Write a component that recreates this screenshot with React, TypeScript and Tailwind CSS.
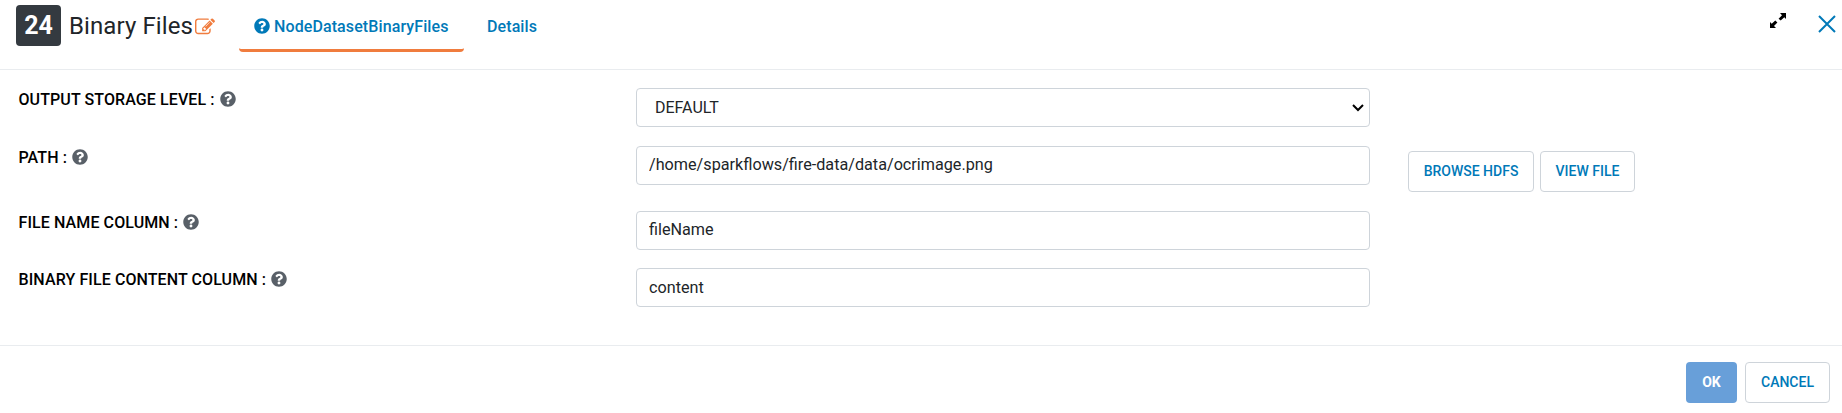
import type { ReactNode } from "react";
import { FaQuestionCircle } from "react-icons/fa";

function EditIcon() {
  return (
    <svg viewBox="0 0 1792 1792" className="size-[20px] fill-[#f07c3e]">
      <path d="M888 1184l116-116-152-152-116 116v56h96v96h56zm440-720q-16-16-33 1l-350 350q-17 17-1 33t33-1l350-350q17-17 1-33zm80 594v190q0 119-84.500 203.500t-203.500 84.500h-832q-119 0-203.500-84.500t-84.500-203.500v-832q0-119 84.500-203.500t203.500-84.500h832q63 0 117 25 15 7 18 23 3 17-9 29l-49 49q-14 14-32 8-23-6-45-6h-832q-66 0-113 47t-47 113v832q0 66 47 113t113 47h832q66 0 113-47t47-113v-126q0-13 9-22l64-64q15-15 35-7t20 29zm-96-738l288 288-672 672h-288v-288zm444 132l-92 92-288-288 92-92q28-28 68-28t68 28l152 152q28 28 28 68t-28 68z" />
    </svg>
  );
}

function Row({ label, className, children }: { label: string; className: string; children: ReactNode }) {
  return (
    <div className={`flex items-start ${className}`}>
      <div className="flex w-[618px] shrink-0 items-center gap-[5px] pl-[0.5px] pt-px text-[16px] leading-[22px] font-medium tracking-[0.1px] text-black">
        <span>{label}</span>
        <FaQuestionCircle className="-mt-[3px] size-[16px] text-[#596068]" />
      </div>
      {children}
    </div>
  );
}

const field = "h-[39px] w-[734px] rounded-[4px] border border-[#ced4da] bg-white text-[16.200px] text-[#212529]";
const button = "flex h-[41px] items-center justify-center rounded-[4px] border border-[#ced4da] text-[14px] font-medium text-[#0079b8]";

export default function App() {
  return (
    <div className="flex h-[413px] w-full flex-col bg-white font-[Roboto,sans-serif]">
      <header className="flex h-[70px] items-start border-b border-[#e9ecef] pl-[16px]">
        <div className="mt-[5px] flex h-[41px] w-[45px] items-center justify-center rounded-[4px] bg-[#343a40] text-[25px] font-bold text-white">24</div>
        <h1 className="ml-[8px] mt-[8px] w-[124px] whitespace-nowrap text-[24px] font-normal leading-[36px] tracking-[0.1px] text-[#212529]">Binary Files</h1>
        <div className="ml-[2px] mt-[17px]"><EditIcon /></div>
        <nav className="ml-[24px] flex text-[16px] font-medium tracking-[0.1px] text-[#0079b8]">
          <div className="flex h-[52px] w-[225px] items-center gap-[4px] rounded-[4px] border-b-3 border-[#f07c3e] pl-[15px] pt-[5px]">
            <FaQuestionCircle className="-mt-[3px] size-[16px]" />
            <span>NodeDatasetBinaryFiles</span>
          </div>
          <div className="flex h-[52px] items-center pl-[23px] pt-[2px]">Details</div>
        </nav>
        <svg viewBox="0 0 16 16" className="ml-auto mt-[13px] size-[16px] fill-black">
          <path d="M10 0H16V6L14.300 4.300L10.700 7.600L8.600 5.700L12 2.200ZM6 15H0V9L1.700 10.700L5.300 7.600L7.400 9.500L4 12.900Z" />
        </svg>
        <svg viewBox="0 0 18 18" className="ml-[32px] mr-[6px] mt-[15px] size-[18px] fill-none stroke-[#0079b8] stroke-2">
          <path d="M1 1L17 17M17 1L1 17" />
        </svg>
      </header>

      <main className="flex flex-1 flex-col pl-[18px]">
        <Row label="OUTPUT STORAGE LEVEL :" className="h-[58px] pt-[18px]">
          <div className={`${field} flex items-center justify-between pl-[18px] pr-[5px]`}>
            <span className="pt-px text-[16px]">DEFAULT</span>
            <svg viewBox="0 0 12 8" className="h-[8px] w-[12px] fill-none stroke-black stroke-2"><path d="M1 1L6 6L11 1" /></svg>
          </div>
        </Row>
        <Row label="PATH :" className="h-[65px] pt-[18px]">
          <input className={`${field} px-[12px] pb-[2px]`} defaultValue="/home/sparkflows/fire-data/data/ocrimage.png" />
          <div className="ml-[38px] mt-[5px] flex gap-[6px]">
            <button className={`${button} w-[126px]`}>BROWSE HDFS</button>
            <button className={`${button} w-[95px]`}>VIEW FILE</button>
          </div>
        </Row>
        <Row label="FILE NAME COLUMN :" className="h-[57px] pt-[18px]">
          <input className={`${field} px-[12px] pb-[2px]`} defaultValue="fileName" />
        </Row>
        <Row label="BINARY FILE CONTENT COLUMN :" className="h-[57px] pt-[18px]">
          <input className={`${field} px-[12px]`} defaultValue="content" />
        </Row>
      </main>

      <footer className="flex h-[68px] justify-end gap-[8px] border-t border-[#e9ecef] pr-[12px] pt-[16px]">
        <button className="h-[41px] w-[51px] rounded-[4px] bg-[#689fd9] text-[14px] font-bold text-white">OK</button>
        <button className={`${button} w-[85px]`}>CANCEL</button>
      </footer>
    </div>
  );
}
